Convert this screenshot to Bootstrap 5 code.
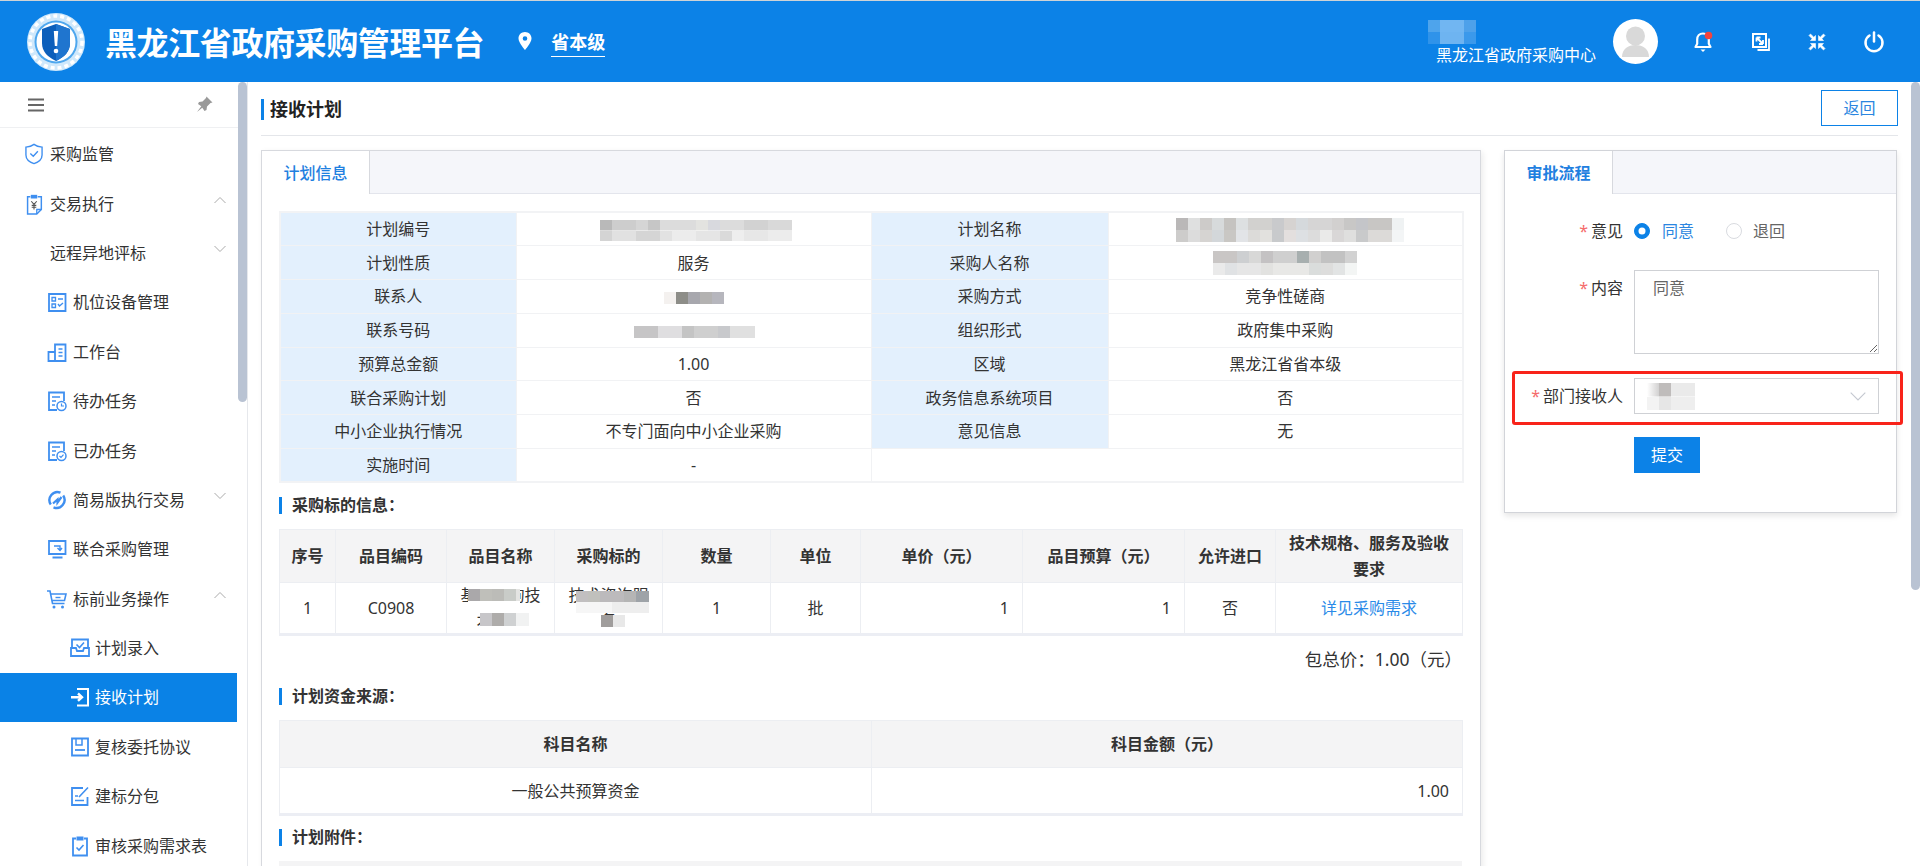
<!DOCTYPE html>
<html lang="zh-CN">
<head>
<meta charset="utf-8">
<title>黑龙江省政府采购管理平台</title>
<link href="https://cdn.jsdelivr.net/npm/bootstrap@5.3.0/dist/css/bootstrap.min.css" rel="stylesheet">
<style>
html,body{height:866px;overflow:hidden}
body{font-family:"Noto Sans","Noto Sans CJK SC",sans-serif;font-size:16px;color:#333;background:#fff}
.app-top{height:82px;background:#0c82e7;border-top:1px solid #cfd3d6;color:#fff;flex:none}
.logo-mark{width:60px;height:60px;margin-left:26px;flex:none}
.app-title{font-size:32px;font-weight:700;margin:2px 0 0 19px;line-height:40px;white-space:nowrap;letter-spacing:-.4px}
.pin-mark{margin:0 0 2px 32px;width:18px;height:18px}
.region{margin-left:17px;font-size:18px;font-weight:700;line-height:26px;border-bottom:1px solid #fff;padding-bottom:1px;margin-top:2px}
.user-box{width:172px;height:62px;margin-right:11px}
.user-name{font-size:16px;line-height:20px;padding-top:34px;padding-left:6px;white-space:nowrap;box-sizing:content-box}
.user-blur{left:-2px;top:9px;width:48px;height:24px;background:linear-gradient(90deg,#4ea4ec 12px,#71b6f2 0 36px,#4ea1ea 0) top/100% 50% no-repeat,linear-gradient(90deg,#2f93ea 12px,#6eb4f1 0 36px,#3b99eb 0) bottom/100% 50% no-repeat}
.avatar{width:45px;height:45px;border-radius:50%;background:#fff;overflow:hidden;flex:none}
.tool{width:56.5px;flex:none}
.tool-row{margin-right:18px;margin-left:18px}
.side{width:248px;flex:none;border-right:1px solid #e6e8ec;background:#fff}
.side-top{height:46px;width:238px;border-bottom:1px solid #eff0f2;padding:0 25px 0 28px}
.side-list{padding-top:1.5px}
.side-item{height:49.4px;width:237px;color:#333;white-space:nowrap;text-decoration:none}
.side-item .ico{flex:none;width:20px;height:22px}
.side-item.lv1{padding-left:24px;gap:6px}
.side-item.lv0{padding-left:50px}
.side-item.lv2{padding-left:47px;gap:6px}
.side-item.lv3{padding-left:70px;gap:5px}
.side-item.on{background:#0a82e6;color:#fff}
.fold{margin-left:auto;margin-right:11px;flex:none;margin-bottom:8px}
.thumb{background:#b9c3d3;z-index:5}
.thumb-a{left:238px;top:82px;width:9px;height:320px;border-radius:5px}
.thumb-b{right:0;top:82px;width:9px;height:508px;border-radius:5px}
.work{padding:0 22px 0 14px;min-width:0}
.work-head{height:54px;border-bottom:1px solid #e4e6ea;margin-left:-1px;padding-bottom:9px;flex:none}
.page-name{font-size:18px;font-weight:700;line-height:21px;border-left:3px solid #0c82e7;padding-left:6px;color:#222;margin-bottom:6px}
.back-btn{width:77px;height:36px;padding:0;border:1px solid #0c82e7;color:#2b86e0;background:#fff;font-size:16px;border-radius:0}
.boards{margin-top:14px;margin-left:-1px;gap:23px}
.board-a{width:1220px;height:760px;flex:none;border:1px solid #d7d9de;border-radius:0;box-shadow:2px 2px 6px rgba(0,0,0,.08);background:#fff}
.board-b{width:393px;height:363px;flex:none;border:1px solid #d2d4d9;border-radius:0;box-shadow:0 3px 6px rgba(0,0,0,.1);background:#fff}
.strip{height:43px;background:#f5f6fa;border-bottom:1px solid #e3e5ec;flex-wrap:nowrap}
.strip .nav-link{width:108px;height:43px;padding:0;background:#fff;border:0;border-right:1px solid #d7d9de;border-radius:0;font-size:16px;font-weight:500;color:#1f80e0;line-height:45px;text-align:center}
.strip .nav-link.bolder{font-weight:700}
.board-body{padding:17px 18px 0 17px}
.tbl{table-layout:fixed;border-collapse:collapse;margin:0;width:1183px;color:#333;--bs-table-bg:transparent}
.tbl th,.tbl td{padding:0;text-align:center;vertical-align:middle;border:1px solid #eceef2;font-size:16px}
.info-tb{border:2px solid #f2f3f5}
.info-tb td{height:33.75px;line-height:24px;border-color:#f1f2f4}
.info-tb td.lab{background:#e3f0fd}
.item-tb th{height:52px;background:#f4f4f5;font-weight:700;line-height:26px;padding:0 6px;color:#333}
.item-tb td{height:51px;line-height:25px}
.item-tb,.fund-tb{border-bottom:3px solid #eceef4}
.fund-tb th{height:47px;background:#f4f4f5;font-weight:700}
.fund-tb td{height:47px}
.num-r{text-align:right!important;padding-right:13px!important}
.no-r{border-right:0!important}
.sec-title{height:17px;line-height:17px;border-left:3px solid #0c82e7;padding-left:10px;font-weight:700;font-size:16px;color:#333;margin:14px 0 15px}
.pack-total{font-size:17.5px;line-height:24px;margin:11px 0 0 0;text-align:right;height:24px}
.sec-gap{margin-top:17px}
.sec-gap2{margin-top:13px}
.ghost{height:47px;background:#f4f4f5}
.lnk{color:#2a8ae8;text-decoration:none}
.mz{display:inline-block;vertical-align:middle}
.mz-a{width:192px;height:21px;margin-left:5px;background:linear-gradient(90deg,#b9b9b9 12px,#cdcdcd 0 36px,#d5d5d5 0 48px,#c6c6c6 0 60px,#dcdcdc 0 96px,#e3e3e0 0 108px,#d8d9de 0 120px,#dcdcdc 0 144px,#d2d2d2 0 168px,#d9d9d9 0) top/100% 50% no-repeat,linear-gradient(90deg,#d4d4d4 12px,#e1e1e1 0 36px,#d5d5d5 0 60px,#e2e2e2 0 72px,#ececec 0 96px,#e5e5e5 0 120px,#dadada 0 132px,#eeeeee 0 144px,#e7e7e7 0 168px,#ececec 0) bottom/100% 50% no-repeat}
.mz-b{width:228px;height:24px;margin-left:9px;background:linear-gradient(90deg,#bab8b8 12px,#dfe0e0 0 24px,#cdcbc9 0 36px,#d7dadb 0 48px,#c5c3c0 0 60px,#dde0e1 0 72px,#d2d1cf 0 96px,#c9cacc 0 108px,#d6d3d1 0 120px,#d5d9dc 0 132px,#d6d5d5 0 156px,#d2d0cf 0 168px,#c8c7c6 0 180px,#c4c5c9 0 192px,#c8c6c4 0 216px,#eff2f3 0) top/100% 50% no-repeat,linear-gradient(90deg,#cdcccb 12px,#dcdcdc 0 24px,#d6d4d2 0 36px,#d3d7da 0 48px,#c9c7c4 0 60px,#e2e4e7 0 72px,#dcdbd9 0 84px,#e2e1de 0 96px,#c8cacc 0 108px,#e3dfde 0 120px,#dde0e3 0 132px,#dcdcdc 0 144px,#eaeae9 0 156px,#d9d7d7 0 168px,#dfdfde 0 180px,#c9cacb 0 192px,#dcdad8 0 216px,#f3f5f6 0) bottom/100% 50% no-repeat}
.mz-c{width:144px;height:24px;background:linear-gradient(90deg,#c9c6c5 24px,#cdcfd1 0 36px,#d8d8d7 0 48px,#c4c2c3 0 60px,#cfcfcf 0 84px,#a7afaf 0 96px,#d1d0cf 0 108px,#c2c2c2 0 132px,#d2d2d2 0) top/100% 50% no-repeat,linear-gradient(90deg,#eaeaea 12px,#e0e2e4 0 24px,#e6e6e6 0 48px,#e2e2e0 0 60px,#e8e8e6 0 96px,#dadddc 0 108px,#dddddc 0 120px,#e2e4e4 0 132px,#f3f5f4 0) bottom/100% 50% no-repeat}
.mz-d{width:60px;height:12px;background:linear-gradient(90deg,#f4f1ef 12px,#8d8d88 0 24px,#a7a7ad 0 36px,#b3b2b1 0 48px,#b6b6bd 0)}
.mz-e{width:121px;height:12px;margin-left:2px;background:linear-gradient(90deg,#c6c5c6 24px,#dfdee0 0 48px,#c4c4c4 0 60px,#cfcfcf 0 84px,#c8c9cc 0 96px,#e0e0e0 0)}
.ov{position:absolute;pointer-events:none}
.cell-rel{position:relative;overflow:hidden;padding:0 12px!important}
.ov-1{left:21px;top:6px;width:52px;height:12px;box-shadow:0 -3px 0 #fff,0 3px 0 #fff;background:linear-gradient(90deg,#aaa8aa 12px,#bfbfba 0 24px,#bcbcb8 0 36px,#c9ccc8 0 48px,#e4e4e2 0)}
.ov-2{left:33px;top:30px;width:49px;height:13px;box-shadow:0 -3px 0 #fff,0 3px 0 #fff;background:linear-gradient(90deg,#c7c6c9 12px,#aeacaa 0 24px,#cfd1d2 0 36px,#f1f2f2 0)}
.ov-3{left:21px;top:8px;width:73px;height:22px;background:linear-gradient(90deg,#c1bfc0 12px,#c0c0bc 0 24px,#bcbabc 0 48px,#b5b5b5 0 60px,#9ea3a8 0) top/100% 50% no-repeat,linear-gradient(90deg,#f6f6f6 36px,#eeeeee 0) bottom/100% 50% no-repeat}
.ov-4{left:46px;top:32px;width:24px;height:12px;box-shadow:0 3px 0 #fff;background:linear-gradient(90deg,#a09d9c 12px,#e8e8e8 0)}
.form-wrap{padding-top:24px}
.f-row{display:flex}
.f-label{width:118px;flex:none;text-align:right;line-height:24px;white-space:nowrap}
.f-label i{font-style:normal;color:#f56c6c;margin-right:3px}
.f-field{width:245px;margin-left:11px;flex:none}
.radio-row{margin-top:1px}
.mt-27{margin-top:27px}
.mt-23{margin-top:23px}
.mt-24{margin-top:24px}
.pt-6{padding-top:6px}
.send-slot{margin-left:129px}
.radio-opt{display:flex;align-items:center;margin:0;line-height:24px;height:24px}
.radio-opt+.radio-opt{margin-left:32px}
.radio-opt .form-check-input{margin:0;width:16px;height:16px;flex:none;border:1px solid #d9dbe0}
.radio-opt .form-check-input:checked{background-color:#0c82e7;border-color:#0c82e7}
.radio-on{color:#2b86e0;margin-left:12px}
.radio-off{color:#666;margin-left:11px}
.note-box{height:84px;border-radius:0;border:1px solid #cfd1d5;color:#666;font-size:16px;padding:5px 18px;line-height:24px;font-family:inherit}
.pick-box{height:36px;border:1px solid #cfd1d5;padding:0 12px}
.pick-blur{width:48px;height:27px;margin-top:1px;background:linear-gradient(90deg,#fff 0,#d2d1d1 12px,#bfbcbb 0 24px,#eaeaea 0) top/100% 50% no-repeat,linear-gradient(90deg,#f3f3f3 12px,#e6e6e6 0 24px,#eeeeee 0) bottom/100% 50% no-repeat}
.red-mark{left:7px;right:-7px;top:-7px;bottom:-11px;border:3px solid #f8231a;border-radius:3px;z-index:3}
.send-btn{width:66px;height:36px;padding:0;background:#0c82e7;border:0;border-radius:0;color:#fff;font-size:16px}
.send-btn:hover{background:#0c82e7;color:#fff}
.back-btn:hover{background:#fff;color:#2b86e0}
</style>
</head>
<body class="position-relative d-flex flex-column">

<header class="app-top d-flex align-items-center">
  <svg class="logo-mark" viewBox="0 0 60 60" aria-hidden="true">
    <circle cx="30" cy="30" r="29" fill="#cfe8fb"/>
    <circle cx="30" cy="30" r="26" fill="none" stroke="#fff" stroke-width="3.5" stroke-dasharray="4 3"/>
    <circle cx="30" cy="30" r="21.5" fill="#4ea7ee"/>
    <circle cx="30" cy="30" r="19.5" fill="#fff"/>
    <path d="M30 12 44 17v14c0 9-6 14-14 18-8-4-14-9-14-18V17Z" fill="#0c5fbb"/>
    <path d="M30 12 44 17v14c0 9-6 14-14 18Z" fill="#1f75cf"/>
    <path d="M27.8 19h4.400l-1 15h-2.400Z" fill="#fff"/>
    <circle cx="30" cy="39" r="2.300" fill="#fff"/>
  </svg>
  <h1 class="app-title">黑龙江省政府采购管理平台</h1>
  <svg class="pin-mark" viewBox="0 0 18 18" aria-hidden="true"><path fill-rule="evenodd" d="M9 0c3.700 0 6.500 2.800 6.500 6.400C15.500 10.500 9 18 9 18S2.500 10.500 2.500 6.400C2.500 2.800 5.300 0 9 0Zm0 4.200a2.300 2.300 0 1 0 0 4.600 2.300 2.300 0 0 0 0-4.600Z" fill="#fff"/></svg>
  <span class="region">省本级</span>

  <div class="ms-auto d-flex align-items-center">
    <div class="user-box position-relative">
      <div class="user-blur position-absolute"></div>
      <div class="user-name">黑龙江省政府采购中心</div>
    </div>
    <div class="avatar">
      <svg width="45" height="45" viewBox="0 0 45 45" aria-hidden="true"><circle cx="22.500" cy="17" r="9.500" fill="#d9d9d9"/><path d="M9 38c0-8 6-12 13.500-12S36 30 36 38Z" fill="#d9d9d9"/></svg>
    </div>
    <div class="tool-row d-flex">
      <div class="tool text-center"><svg width="24" height="24" viewBox="0 0 24 24" aria-hidden="true"><path d="M11 3.500c-3.700 0-5.800 2.900-5.800 6v4.300L3.500 17h15l-1.700-3.200V9.500c0-3.100-2.100-6-5.800-6Z" fill="none" stroke="#fff" stroke-width="2.200" stroke-linejoin="round"/><path d="M8.500 19.500h5L11 22Z" fill="#fff"/><circle cx="16.500" cy="5.500" r="3.800" fill="#f4433c"/></svg></div>
      <div class="tool text-center"><svg width="24" height="24" viewBox="0 0 24 24" aria-hidden="true"><path d="M4 4h13v13H4Z" fill="none" stroke="#fff" stroke-width="2"/><path d="M20 8.500V20H8.500" fill="none" stroke="#fff" stroke-width="1.800"/><path d="M7.500 7.500l6.500 6.500M7.500 7.500h4M7.500 7.500v4M14 14h-4M14 14v-4" fill="none" stroke="#fff" stroke-width="1.800"/></svg></div>
      <div class="tool text-center"><svg width="24" height="24" viewBox="0 0 24 24" aria-hidden="true"><g fill="#fff" stroke="#fff" stroke-width=".6"><path d="M10.500 10.500H5.500l1.700-1.700L4 5.500 5.500 4l3.300 3.200 1.700-1.700Z"/><path d="M13.500 10.500h5l-1.700-1.700L20 5.500 18.500 4l-3.300 3.200-1.700-1.700Z"/><path d="M10.500 13.500H5.500l1.700 1.700L4 18.500 5.500 20l3.300-3.200 1.700 1.700Z"/><path d="M13.500 13.500h5l-1.700 1.700L20 18.500 18.500 20l-3.300-3.200-1.700 1.700Z"/></g></svg></div>
      <div class="tool text-center"><svg width="24" height="24" viewBox="0 0 24 24" aria-hidden="true"><path d="M7.500 5.500a8.500 8.500 0 1 0 9 0" fill="none" stroke="#fff" stroke-width="2.500" stroke-linecap="round"/><path d="M12 2.500v9" stroke="#fff" stroke-width="2.500" stroke-linecap="round"/></svg></div>
    </div>
  </div>
</header>

<div class="d-flex flex-grow-1 overflow-hidden">
  <aside class="side overflow-hidden">
    <div class="side-top d-flex align-items-center justify-content-between">
      <svg width="16" height="14" viewBox="0 0 16 14" aria-hidden="true"><path d="M0 1.500h16M0 7h16M0 12.500h16" stroke="#666" stroke-width="2"/></svg>
      <svg width="17" height="17" viewBox="0 0 17 17" aria-hidden="true"><path d="M10.500.5l6 6-2 .5-3.500 3.500-.5 3.500-2 1-2.200-3.300L1 16l4.300-5.800L2 8l1-2 3.500-.5L10 2Z" fill="#999"/></svg>
    </div>
    <nav class="side-list">
      <a class="side-item lv1 d-flex align-items-center">
        <svg class="ico" viewBox="0 0 20 24" aria-hidden="true"><path d="M10 1.500c2.500 2 5 2.800 8.800 3v8.500c0 4.700-4 7.800-8.800 9.500C5.200 20.800 1.200 17.700 1.200 13V4.500C5 4.300 7.500 3.500 10 1.500Z" fill="none" stroke="#3f8ff0" stroke-width="1.500"/><path d="M6 11.500l3.200 3 5-5.500" fill="none" stroke="#3f8ff0" stroke-width="1.500"/></svg>
        <span>采购监管</span>
      </a>
      <a class="side-item lv1 d-flex align-items-center">
        <svg class="ico" viewBox="0 0 20 24" aria-hidden="true"><path d="M6 4H3v19h10l5-5V4h-4" fill="none" stroke="#3f8ff0" stroke-width="1.600"/><path d="M6.500 2h7v4h-7Z" fill="#3f8ff0"/><path d="M7 9l3 3.500L13 9M10 12.500V18M7.500 13.500h5M7.500 15.500h5" fill="none" stroke="#555" stroke-width="1.200"/><path d="M13 23v-5h5" fill="none" stroke="#3f8ff0" stroke-width="1.400"/></svg>
        <span>交易执行</span>
        <svg class="fold" width="12" height="8" viewBox="0 0 12 8" aria-hidden="true"><path d="M.5 7 6 1.500 11.500 7" fill="none" stroke="#aaa" stroke-width="1"/></svg>
      </a>
      <a class="side-item lv0 d-flex align-items-center">
        <span>远程异地评标</span>
        <svg class="fold" width="12" height="8" viewBox="0 0 12 8" aria-hidden="true"><path d="M.5 1 6 6.500 11.500 1" fill="none" stroke="#aaa" stroke-width="1"/></svg>
      </a>
      <a class="side-item lv2 d-flex align-items-center">
        <svg class="ico" viewBox="0 0 20 22" aria-hidden="true"><path d="M2 3h16.500v17H2Z" fill="none" stroke="#3f8ff0" stroke-width="1.800"/><path d="M5 6.500h3.500V10H5ZM5 13h3.500v3.500H5Z" fill="none" stroke="#3f8ff0" stroke-width="1.300"/><path d="M11 8h5M11 13l1.500 2 3.500-3" fill="none" stroke="#3f8ff0" stroke-width="1.400"/></svg>
        <span>机位设备管理</span>
      </a>
      <a class="side-item lv2 d-flex align-items-center">
        <svg class="ico" viewBox="0 0 20 22" aria-hidden="true"><path d="M8 3.500h10.500v16.500H8ZM1.500 11H8v9H1.500Z" fill="none" stroke="#3f8ff0" stroke-width="1.800"/><path d="M11.500 8h4M11.500 11.500h4M11.500 15h4" stroke="#3f8ff0" stroke-width="1.500"/></svg>
        <span>工作台</span>
      </a>
      <a class="side-item lv2 d-flex align-items-center">
        <svg class="ico" viewBox="0 0 20 22" aria-hidden="true"><path d="M10 20H2V2.500h15V11" fill="none" stroke="#3f8ff0" stroke-width="1.800"/><path d="M5 7h8M5 11h4M5 15h3" stroke="#3f8ff0" stroke-width="1.500"/><circle cx="14.500" cy="16" r="4.500" fill="#fff" stroke="#3f8ff0" stroke-width="1.500"/><path d="M14.500 13.500V16h2.500" fill="none" stroke="#3f8ff0" stroke-width="1.200"/></svg>
        <span>待办任务</span>
      </a>
      <a class="side-item lv2 d-flex align-items-center">
        <svg class="ico" viewBox="0 0 20 22" aria-hidden="true"><path d="M10 20H2V2.500h15V11" fill="none" stroke="#3f8ff0" stroke-width="1.800"/><path d="M5 7h8M5 11h4M5 15h3" stroke="#3f8ff0" stroke-width="1.500"/><circle cx="14.500" cy="16" r="4.500" fill="#fff" stroke="#3f8ff0" stroke-width="1.500"/><path d="M12.500 16l1.500 1.500 2.500-2.800" fill="none" stroke="#3f8ff0" stroke-width="1.200"/></svg>
        <span>已办任务</span>
      </a>
      <a class="side-item lv2 d-flex align-items-center">
        <svg class="ico" viewBox="0 0 20 22" aria-hidden="true"><path d="M13.500 3.700A8 8 0 0 0 3.800 15.500M6.500 18.300A8 8 0 0 0 16.200 6.500" fill="none" stroke="#3f8ff0" stroke-width="2.400"/><path d="M6 14.500l4.500-4v3l4-5.500" fill="none" stroke="#3f8ff0" stroke-width="2.200"/></svg>
        <span>简易版执行交易</span>
        <svg class="fold" width="12" height="8" viewBox="0 0 12 8" aria-hidden="true"><path d="M.5 1 6 6.500 11.500 1" fill="none" stroke="#aaa" stroke-width="1"/></svg>
      </a>
      <a class="side-item lv2 d-flex align-items-center">
        <svg class="ico" viewBox="0 0 20 22" aria-hidden="true"><path d="M2 3h16.500v13H2ZM5.500 19.500h10" fill="none" stroke="#3f8ff0" stroke-width="1.800"/><path d="M7 8h6v4M10.500 10l2.500 2.500 2-2.500" fill="none" stroke="#3f8ff0" stroke-width="1.400"/></svg>
        <span>联合采购管理</span>
      </a>
      <a class="side-item lv2 d-flex align-items-center">
        <svg class="ico" viewBox="0 0 20 22" aria-hidden="true"><path d="M0 3h3l2.500 12.500h12M4 6h15l-1.500 6.500H5.500" fill="none" stroke="#3f8ff0" stroke-width="1.600"/><path d="M8.500 9.500h5" stroke="#3f8ff0" stroke-width="1.400"/><circle cx="7" cy="19" r="1.500" fill="#3f8ff0"/><circle cx="15.500" cy="19" r="1.500" fill="#3f8ff0"/></svg>
        <span>标前业务操作</span>
        <svg class="fold" width="12" height="8" viewBox="0 0 12 8" aria-hidden="true"><path d="M.5 7 6 1.500 11.500 7" fill="none" stroke="#aaa" stroke-width="1"/></svg>
      </a>
      <a class="side-item lv3 d-flex align-items-center">
        <svg class="ico" viewBox="0 0 20 22" aria-hidden="true"><path d="M2 11V2.500h16V11M1 11h5l1 3h6l1-3h5v8H1Z" fill="none" stroke="#3f8ff0" stroke-width="1.800"/><path d="M6.500 7.500 9.500 10.500 14 5.500" fill="none" stroke="#3f8ff0" stroke-width="1.600"/></svg>
        <span>计划录入</span>
      </a>
      <a class="side-item lv3 on d-flex align-items-center">
        <svg class="ico" viewBox="0 0 20 22" aria-hidden="true"><path d="M7 3h11v16.500H7" fill="none" stroke="#fff" stroke-width="2"/><path d="M1 11.200h10M8 7.500l4 3.700-4 3.700" fill="none" stroke="#fff" stroke-width="2.400"/></svg>
        <span>接收计划</span>
      </a>
      <a class="side-item lv3 d-flex align-items-center">
        <svg class="ico" viewBox="0 0 20 22" aria-hidden="true"><path d="M2 2.500h16v17H2Z" fill="none" stroke="#3f8ff0" stroke-width="1.800"/><path d="M6 2.500V9h6V2.500" fill="none" stroke="#3f8ff0" stroke-width="1.500"/><path d="M5 14h10" stroke="#3f8ff0" stroke-width="1.800"/></svg>
        <span>复核委托协议</span>
      </a>
      <a class="side-item lv3 d-flex align-items-center">
        <svg class="ico" viewBox="0 0 20 22" aria-hidden="true"><path d="M13 3H2v17h15.500v-8" fill="none" stroke="#3f8ff0" stroke-width="1.800"/><path d="M9 12 18 2.500M5 15.500h9M5 11h3" fill="none" stroke="#3f8ff0" stroke-width="1.600"/></svg>
        <span>建标分包</span>
      </a>
      <a class="side-item lv3 d-flex align-items-center">
        <svg class="ico" viewBox="0 0 20 22" aria-hidden="true"><path d="M6 3.500H3v17h14v-17h-3" fill="none" stroke="#3f8ff0" stroke-width="1.800"/><path d="M6.500 1.500h7v4h-7Z" fill="#3f8ff0"/><path d="M6.500 12.500l2.500 2.500 4.500-5" fill="none" stroke="#3f8ff0" stroke-width="1.600"/></svg>
        <span>审核采购需求表</span>
      </a>
    </nav>
  </aside>

  <main class="work flex-grow-1 d-flex flex-column">
    <div class="work-head d-flex align-items-end justify-content-between">
      <div class="page-name">接收计划</div>
      <button type="button" class="btn back-btn">返回</button>
    </div>

    <div class="boards d-flex align-items-start">
      <section class="card board-a">
        <div class="nav strip"><a class="nav-link active">计划信息</a></div>
        <div class="board-body">
          <table class="table tbl info-tb">
            <colgroup><col style="width:236px"><col style="width:355px"><col style="width:237px"><col style="width:355px"></colgroup>
            <tbody>
              <tr><td class="lab">计划编号</td><td><span class="mz mz-a"></span></td><td class="lab">计划名称</td><td><span class="mz mz-b"></span></td></tr>
              <tr><td class="lab">计划性质</td><td>服务</td><td class="lab">采购人名称</td><td><span class="mz mz-c"></span></td></tr>
              <tr><td class="lab">联系人</td><td><span class="mz mz-d"></span></td><td class="lab">采购方式</td><td>竞争性磋商</td></tr>
              <tr><td class="lab">联系号码</td><td><span class="mz mz-e"></span></td><td class="lab">组织形式</td><td>政府集中采购</td></tr>
              <tr><td class="lab">预算总金额</td><td>1.00</td><td class="lab">区域</td><td>黑龙江省省本级</td></tr>
              <tr><td class="lab">联合采购计划</td><td>否</td><td class="lab">政务信息系统项目</td><td>否</td></tr>
              <tr><td class="lab">中小企业执行情况</td><td>不专门面向中小企业采购</td><td class="lab">意见信息</td><td>无</td></tr>
              <tr><td class="lab">实施时间</td><td>-</td><td colspan="2"></td></tr>
            </tbody>
          </table>

          <div class="sec-title">采购标的信息：</div>
          <table class="table tbl item-tb">
            <colgroup><col style="width:56px"><col style="width:111px"><col style="width:108px"><col style="width:108px"><col style="width:108px"><col style="width:90px"><col style="width:162px"><col style="width:162px"><col style="width:91px"><col style="width:187px"></colgroup>
            <thead>
              <tr><th>序号</th><th>品目编码</th><th>品目名称</th><th>采购标的</th><th>数量</th><th>单位</th><th>单价（元）</th><th>品目预算（元）</th><th class="no-r">允许进口</th><th>技术规格、服务及验收要求</th></tr>
            </thead>
            <tbody>
              <tr>
                <td>1</td><td>C0908</td>
                <td class="cell-rel">基础咨询技<br>术服务<span class="ov ov-1"></span><span class="ov ov-2"></span></td>
                <td class="cell-rel">技术咨询服<br>务<span class="ov ov-3"></span><span class="ov ov-4"></span></td>
                <td>1</td><td>批</td>
                <td class="num-r">1</td><td class="num-r">1</td>
                <td class="no-r">否</td><td><a class="lnk" href="#">详见采购需求</a></td>
              </tr>
            </tbody>
          </table>
          <div class="pack-total">包总价：1.00（元）</div>

          <div class="sec-title sec-gap">计划资金来源：</div>
          <table class="table tbl fund-tb">
            <colgroup><col style="width:592px"><col style="width:591px"></colgroup>
            <thead><tr><th>科目名称</th><th>科目金额（元）</th></tr></thead>
            <tbody><tr><td>一般公共预算资金</td><td class="num-r">1.00</td></tr></tbody>
          </table>

          <div class="sec-title sec-gap2">计划附件：</div>
          <div class="ghost"></div>
        </div>
      </section>

      <section class="card board-b">
        <div class="nav strip"><a class="nav-link active bolder">审批流程</a></div>
        <div class="form-wrap">
          <div class="f-row radio-row">
            <div class="f-label"><i>*</i>意见</div>
            <div class="f-field d-flex">
              <label class="radio-opt"><input class="form-check-input" type="radio" name="op" checked><span class="radio-on">同意</span></label>
              <label class="radio-opt"><input class="form-check-input" type="radio" name="op"><span class="radio-off">退回</span></label>
            </div>
          </div>
          <div class="f-row mt-27">
            <div class="f-label pt-6"><i>*</i>内容</div>
            <div class="f-field"><textarea class="form-control note-box">同意</textarea></div>
          </div>
          <div class="f-row mt-24 position-relative">
            <div class="f-label pt-6"><i>*</i>部门接收人</div>
            <div class="f-field">
              <div class="pick-box d-flex align-items-center justify-content-between">
                <span class="pick-blur"></span>
                <svg width="16" height="9" viewBox="0 0 16 9" aria-hidden="true"><path d="M.7.7 8 8 15.300.7" fill="none" stroke="#c4c8d0" stroke-width="1.100"/></svg>
              </div>
            </div>
            <div class="red-mark position-absolute pe-none"></div>
          </div>
          <div class="f-row mt-23">
            <div class="f-field send-slot"><button type="button" class="btn send-btn">提交</button></div>
          </div>
        </div>
      </section>
    </div>
  </main>
</div>

<div class="thumb thumb-a position-absolute"></div>
<div class="thumb thumb-b position-absolute"></div>

<script src="https://cdn.jsdelivr.net/npm/bootstrap@5.3.0/dist/js/bootstrap.bundle.min.js"></script>
</body>
</html>
